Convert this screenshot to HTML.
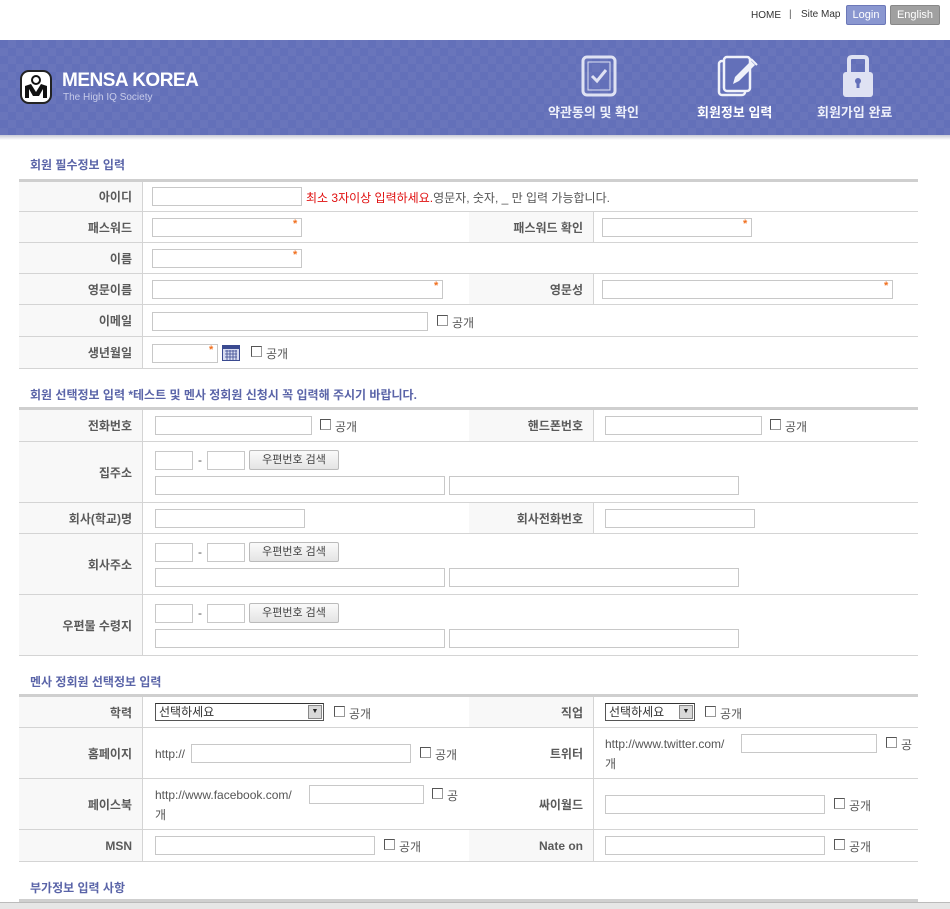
<!DOCTYPE html>
<html><head><meta charset="utf-8"><style>
*{margin:0;padding:0;box-sizing:border-box}
body{width:950px;height:909px;position:relative;overflow:hidden;background:#fff;font-family:"Liberation Sans","Noto Sans CJK KR","NanumGothic",sans-serif;font-size:12px;color:#555}
.a{position:absolute}
.hdr{left:0;top:40px;width:950px;height:95px;background-color:#6370b9;background-image:linear-gradient(45deg,rgba(255,255,255,.035) 25%,transparent 25%,transparent 75%,rgba(255,255,255,.035) 75%),linear-gradient(45deg,rgba(255,255,255,.035) 25%,transparent 25%,transparent 75%,rgba(255,255,255,.035) 75%);background-size:16px 16px;background-position:0 0,8px 8px}
.sh{left:0;top:135px;width:950px;height:5px;background:linear-gradient(#c9cbd6,#fff)}
.tt{font-weight:bold;color:#5a64a8;font-size:12px}
.thick{left:19px;width:899px;height:3px;background:#cfcfcf}
.ln{left:19px;width:899px;height:1px;background:#d4d4d4}
.lab{background:#f8f8f8;text-align:right;font-weight:bold;color:#5a5a5a;padding-right:10px;display:flex;align-items:center;justify-content:flex-end}
.vl{width:1px;background:#d4d4d4}
.in{border:1px solid #c8c8c8;background:#fff;height:19px}
.st{color:#f07020;font-size:11px;font-weight:bold}
.cb{width:11px;height:11px;border:1px solid #999;border-left-color:#555;border-top-color:#555;background:#fff}
.t{white-space:nowrap}
.btn{height:20px;width:90px;border:1px solid #bbb;border-radius:2px;background:linear-gradient(#fafafa,#e4e4e4);font-size:11px;text-align:center;line-height:18px;color:#444}
.sel{height:18px;border:1px solid #555;border-top-color:#333;background:#fff;font-size:12px;line-height:16px;padding-left:3px;color:#333}
.arr{position:absolute;right:1px;top:1px;width:14px;height:14px;background:#d8d8d8;border:1px solid #888;font-size:7px;line-height:12px;text-align:center;color:#222}
</style></head><body>
<div class="a t" style="left:751px;top:10px;font-size:10px;color:#333">HOME</div>
<div class="a t" style="left:789px;top:9px;font-size:10px;color:#555">|</div>
<div class="a t" style="left:801px;top:9px;font-size:10px;color:#333">Site Map</div>
<div class="a" style="left:846px;top:5px;width:40px;height:20px;background:#8a97d0;border:1px solid #6c78b8;border-radius:2px;color:#fff;font-size:11px;text-align:center;line-height:18px">Login</div>
<div class="a" style="left:890px;top:5px;width:50px;height:20px;background:#a0a0a0;border:1px solid #888;border-radius:2px;color:#fff;font-size:11px;text-align:center;line-height:18px">English</div>

<div class="a hdr"></div><div class="a sh"></div>
<div class="a" style="left:20px;top:70px;width:32px;height:34px;background:#fff;border-radius:9px;border:2px solid #222"></div>
<svg class="a" style="left:22px;top:72px" width="28" height="30" viewBox="0 0 28 30"><circle cx="14" cy="8" r="4" fill="none" stroke="#111" stroke-width="2"/><path d="M3 26 V14 L9 12 L14 20 L19 12 L25 14 V26 H21 V17 L17 24 H11 L7 17 V26Z" fill="#111"/></svg>
<div class="a t" style="left:62px;top:70px;font-size:19px;font-weight:bold;color:#fff;letter-spacing:-0.5px">MENSA KOREA</div>
<div class="a t" style="left:63px;top:92px;font-size:10px;color:#c8ccea">The High IQ Society</div>
<svg class="a" style="left:581px;top:55px" width="36" height="42" viewBox="0 0 36 42"><rect x="2" y="2" width="32" height="38" rx="4" fill="none" stroke="#dfe2f3" stroke-width="3"/><rect x="7" y="7" width="22" height="28" fill="none" stroke="#dfe2f3" stroke-width="1"/><path d="M11 21 L16 26 L25 15" fill="none" stroke="#dfe2f3" stroke-width="3"/></svg>
<div class="a t" style="left:548px;top:102px;font-size:13px;font-weight:bold;color:#eef0fa">약관동의 및 확인</div>
<svg class="a" style="left:716px;top:55px" width="48" height="42" viewBox="0 0 48 42"><rect x="3" y="6" width="26" height="34" rx="3" fill="none" stroke="#f0f2fa" stroke-width="2.5"/><rect x="8" y="2" width="26" height="34" rx="3" fill="#6370b9" stroke="#f0f2fa" stroke-width="2.5"/><path d="M17 29 L19 22 L35 6 L39 10 L23 26Z" fill="#f0f2fa"/><path d="M35 4 L41 10" stroke="#f0f2fa" stroke-width="2"/></svg>
<div class="a t" style="left:697px;top:102px;font-size:13px;font-weight:bold;color:#fff">회원정보 입력</div>
<svg class="a" style="left:843px;top:55px" width="30" height="42" viewBox="0 0 30 42"><path d="M6 18 V5 Q6 2 9 2 H21 Q24 2 24 5 V18" fill="none" stroke="#dfe2f3" stroke-width="4"/><rect x="0" y="17" width="30" height="25" rx="3" fill="#dfe2f3"/><circle cx="15" cy="26" r="3" fill="#6370b9"/><rect x="13.5" y="26" width="3" height="7" fill="#6370b9"/></svg>
<div class="a t" style="left:817px;top:102px;font-size:13px;font-weight:bold;color:#eef0fa">회원가입 완료</div>

<div class="a t tt" style="left:30px;top:156px">회원 필수정보 입력</div>
<div class="a thick" style="top:179px"></div>
<div class="a" style="left:19px;top:182px;width:123px;height:186px;background:#f8f8f8"></div>
<div class="a" style="left:469px;top:212px;width:124px;height:30px;background:#f8f8f8"></div>
<div class="a" style="left:469px;top:274px;width:124px;height:30px;background:#f8f8f8"></div>
<div class="a vl" style="left:142px;top:182px;height:186px"></div>
<div class="a vl" style="left:593px;top:212px;height:30px"></div>
<div class="a vl" style="left:593px;top:274px;height:30px"></div>
<div class="a ln" style="top:211px"></div><div class="a ln" style="top:242px"></div><div class="a ln" style="top:273px"></div><div class="a ln" style="top:304px"></div><div class="a ln" style="top:336px"></div><div class="a ln" style="top:368px"></div>
<div class="a lab" style="left:19px;top:182px;width:123px;height:29px;background:none">아이디</div>
<div class="a lab" style="left:19px;top:212px;width:123px;height:30px;background:none">패스워드</div>
<div class="a lab" style="left:19px;top:243px;width:123px;height:30px;background:none">이름</div>
<div class="a lab" style="left:19px;top:274px;width:123px;height:30px;background:none">영문이름</div>
<div class="a lab" style="left:19px;top:305px;width:123px;height:31px;background:none">이메일</div>
<div class="a lab" style="left:19px;top:337px;width:123px;height:31px;background:none">생년월일</div>
<div class="a lab" style="left:469px;top:212px;width:124px;height:30px;background:none">패스워드 확인</div>
<div class="a lab" style="left:469px;top:274px;width:124px;height:30px;background:none">영문성</div>
<div class="a in" style="left:152px;top:187px;width:150px"></div>
<div class="a t" style="left:306px;top:189px"><span style="color:#e01010">최소 3자이상 입력하세요.</span>영문자, 숫자, _ 만 입력 가능합니다.</div>
<div class="a in" style="left:152px;top:218px;width:150px"></div><div class="a st" style="left:293px;top:218px">*</div>
<div class="a in" style="left:602px;top:218px;width:150px"></div><div class="a st" style="left:743px;top:218px">*</div>
<div class="a in" style="left:152px;top:249px;width:150px"></div><div class="a st" style="left:293px;top:249px">*</div>
<div class="a in" style="left:152px;top:280px;width:291px"></div><div class="a st" style="left:434px;top:280px">*</div>
<div class="a in" style="left:602px;top:280px;width:291px"></div><div class="a st" style="left:884px;top:280px">*</div>
<div class="a in" style="left:152px;top:312px;width:276px"></div>
<div class="a cb" style="left:437px;top:315px"></div><div class="a t" style="left:452px;top:314px">공개</div>
<div class="a in" style="left:152px;top:344px;width:66px"></div><div class="a st" style="left:209px;top:344px">*</div>
<svg class="a" style="left:222px;top:344px" width="18" height="17"><rect x="0.5" y="1.5" width="17" height="15" fill="#d8dcf0" stroke="#3a4a90"/><rect x="1" y="2" width="16" height="3" fill="#3a4a90"/><path d="M3 7H15M3 10H15M3 13H15M5 6V16M8 6V16M11 6V16M14 6V16" stroke="#3a4a90" stroke-width=".8"/></svg>
<div class="a cb" style="left:251px;top:346px"></div><div class="a t" style="left:266px;top:345px">공개</div>

<div class="a t tt" style="left:30px;top:386px">회원 선택정보 입력 *테스트 및 멘사 정회원 신청시 꼭 입력해 주시기 바랍니다.</div>
<div class="a thick" style="top:407px"></div>
<div class="a" style="left:19px;top:410px;width:123px;height:245px;background:#f8f8f8"></div>
<div class="a" style="left:469px;top:410px;width:124px;height:31px;background:#f8f8f8"></div>
<div class="a" style="left:469px;top:503px;width:124px;height:30px;background:#f8f8f8"></div>
<div class="a vl" style="left:142px;top:410px;height:245px"></div>
<div class="a vl" style="left:593px;top:410px;height:31px"></div>
<div class="a vl" style="left:593px;top:503px;height:30px"></div>
<div class="a ln" style="top:441px"></div><div class="a ln" style="top:502px"></div><div class="a ln" style="top:533px"></div><div class="a ln" style="top:594px"></div><div class="a ln" style="top:655px"></div>
<div class="a lab" style="left:19px;top:410px;width:123px;height:31px;background:none">전화번호</div>
<div class="a lab" style="left:19px;top:442px;width:123px;height:60px;background:none">집주소</div>
<div class="a lab" style="left:19px;top:503px;width:123px;height:30px;background:none">회사(학교)명</div>
<div class="a lab" style="left:19px;top:534px;width:123px;height:60px;background:none">회사주소</div>
<div class="a lab" style="left:19px;top:595px;width:123px;height:60px;background:none">우편물 수령지</div>
<div class="a lab" style="left:469px;top:410px;width:124px;height:31px;background:none">핸드폰번호</div>
<div class="a lab" style="left:469px;top:503px;width:124px;height:30px;background:none">회사전화번호</div>
<div class="a in" style="left:155px;top:416px;width:157px"></div><div class="a cb" style="left:320px;top:419px"></div><div class="a t" style="left:335px;top:418px">공개</div>
<div class="a in" style="left:605px;top:416px;width:157px"></div><div class="a cb" style="left:770px;top:419px"></div><div class="a t" style="left:785px;top:418px">공개</div>
<div class="a in" style="left:155px;top:509px;width:150px"></div>
<div class="a in" style="left:605px;top:509px;width:150px"></div>
<div class="a in" style="left:155px;top:451px;width:38px"></div><div class="a t" style="left:198px;top:453px">-</div><div class="a in" style="left:207px;top:451px;width:38px"></div><div class="a btn" style="left:249px;top:450px">우편번호 검색</div>
<div class="a in" style="left:155px;top:476px;width:290px"></div><div class="a in" style="left:449px;top:476px;width:290px"></div>
<div class="a in" style="left:155px;top:543px;width:38px"></div><div class="a t" style="left:198px;top:545px">-</div><div class="a in" style="left:207px;top:543px;width:38px"></div><div class="a btn" style="left:249px;top:542px">우편번호 검색</div>
<div class="a in" style="left:155px;top:568px;width:290px"></div><div class="a in" style="left:449px;top:568px;width:290px"></div>
<div class="a in" style="left:155px;top:604px;width:38px"></div><div class="a t" style="left:198px;top:606px">-</div><div class="a in" style="left:207px;top:604px;width:38px"></div><div class="a btn" style="left:249px;top:603px">우편번호 검색</div>
<div class="a in" style="left:155px;top:629px;width:290px"></div><div class="a in" style="left:449px;top:629px;width:290px"></div>

<div class="a t tt" style="left:30px;top:673px">멘사 정회원 선택정보 입력</div>
<div class="a thick" style="top:694px"></div>
<div class="a" style="left:19px;top:697px;width:123px;height:164px;background:#f8f8f8"></div>
<div class="a" style="left:469px;top:697px;width:124px;height:30px;background:#f8f8f8"></div>
<div class="a" style="left:469px;top:830px;width:124px;height:31px;background:#f8f8f8"></div>
<div class="a vl" style="left:142px;top:697px;height:164px"></div>
<div class="a vl" style="left:593px;top:697px;height:164px"></div>
<div class="a ln" style="top:727px"></div><div class="a ln" style="top:778px"></div><div class="a ln" style="top:829px"></div><div class="a ln" style="top:861px"></div>
<div class="a lab" style="left:19px;top:697px;width:123px;height:30px;background:none">학력</div>
<div class="a lab" style="left:19px;top:728px;width:123px;height:50px;background:none">홈페이지</div>
<div class="a lab" style="left:19px;top:779px;width:123px;height:50px;background:none">페이스북</div>
<div class="a lab" style="left:19px;top:830px;width:123px;height:31px;background:none">MSN</div>
<div class="a lab" style="left:469px;top:697px;width:124px;height:30px;background:none">직업</div>
<div class="a lab" style="left:469px;top:728px;width:124px;height:50px;background:none">트위터</div>
<div class="a lab" style="left:469px;top:779px;width:124px;height:50px;background:none">싸이월드</div>
<div class="a lab" style="left:469px;top:830px;width:124px;height:31px;background:none">Nate on</div>
<div class="a sel" style="left:155px;top:703px;width:169px">선택하세요<div class="arr">▼</div></div>
<div class="a cb" style="left:334px;top:706px"></div><div class="a t" style="left:349px;top:705px">공개</div>
<div class="a sel" style="left:605px;top:703px;width:90px">선택하세요<div class="arr">▼</div></div>
<div class="a cb" style="left:705px;top:706px"></div><div class="a t" style="left:720px;top:705px">공개</div>
<div class="a t" style="left:155px;top:747px">http://</div><div class="a in" style="left:191px;top:744px;width:220px"></div><div class="a cb" style="left:420px;top:747px"></div><div class="a t" style="left:435px;top:746px">공개</div>
<div class="a t" style="left:605px;top:737px">http://www.twitter.com/</div><div class="a in" style="left:741px;top:734px;width:136px"></div><div class="a cb" style="left:886px;top:737px"></div><div class="a t" style="left:901px;top:736px">공</div><div class="a t" style="left:605px;top:755px">개</div>
<div class="a t" style="left:155px;top:788px">http://www.facebook.com/</div><div class="a in" style="left:309px;top:785px;width:115px"></div><div class="a cb" style="left:432px;top:788px"></div><div class="a t" style="left:447px;top:787px">공</div><div class="a t" style="left:155px;top:806px">개</div>
<div class="a in" style="left:605px;top:795px;width:220px"></div><div class="a cb" style="left:834px;top:798px"></div><div class="a t" style="left:849px;top:797px">공개</div>
<div class="a in" style="left:155px;top:836px;width:220px"></div><div class="a cb" style="left:384px;top:839px"></div><div class="a t" style="left:399px;top:838px">공개</div>
<div class="a in" style="left:605px;top:836px;width:220px"></div><div class="a cb" style="left:834px;top:839px"></div><div class="a t" style="left:849px;top:838px">공개</div>

<div class="a t tt" style="left:30px;top:879px">부가정보 입력 사항</div>
<div class="a thick" style="top:899px"></div>
<div class="a" style="left:0;top:902px;width:950px;height:7px;background:#e6e6e6;border-top:1px solid #bbb"></div>
</body></html>
